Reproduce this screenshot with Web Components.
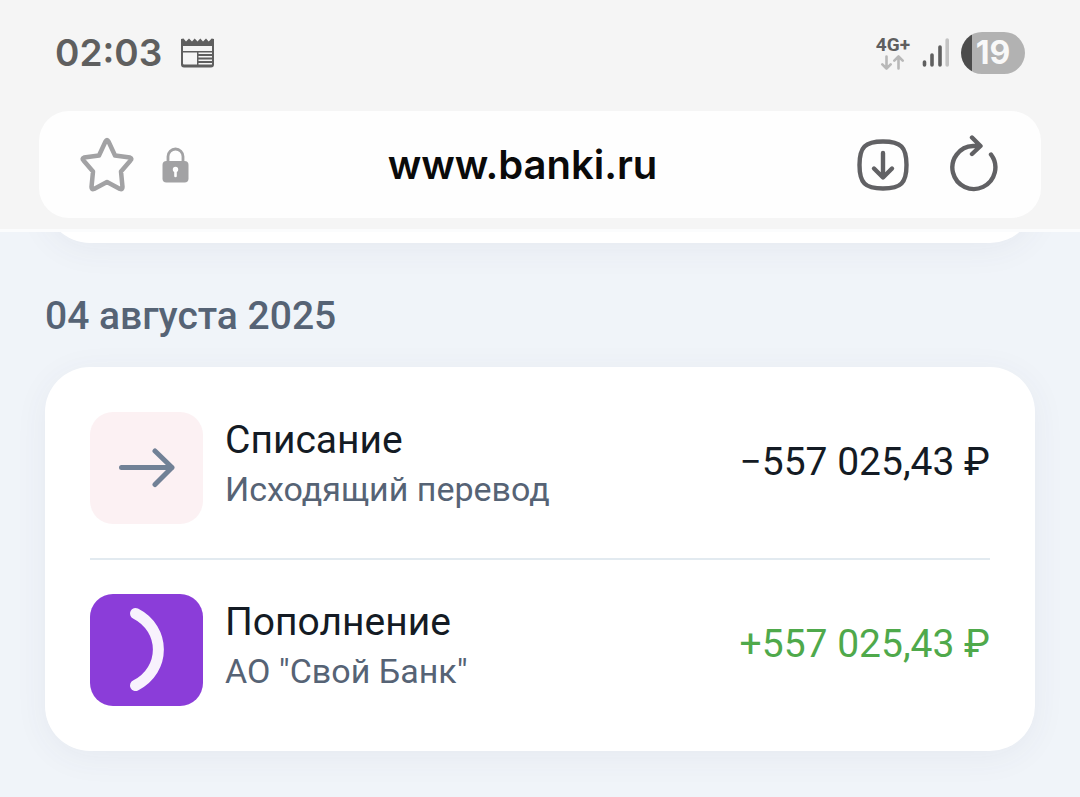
<!DOCTYPE html>
<html lang="ru">
<head>
<meta charset="utf-8">
<meta name="viewport" content="width=device-width, initial-scale=1">
<title>banki.ru</title>
<style>
  html { background: #f0f4f9; }
  body { margin: 0; font-family: Roboto, "Noto Sans", sans-serif; color: #141b24; }
</style>
</head>
<body>
<browser-chrome>
  <status-bar time="02:03" battery="19"></status-bar>
  <address-bar url="www.banki.ru"></address-bar>
</browser-chrome>
<operations-feed>
  <feed-card class="previous"></feed-card>
  <day-group day="04 августа 2025">
    <operation-row name="Списание" detail="Исходящий перевод" amount="−557 025,43 ₽">
      <transfer-icon></transfer-icon>
    </operation-row>
    <operation-row name="Пополнение" detail='АО "Свой Банк"' amount="+557 025,43 ₽" income>
      <bank-icon></bank-icon>
    </operation-row>
  </day-group>
</operations-feed>

<script>
class BaseElement extends HTMLElement {
  connectedCallback() {
    if (!this.shadowRoot) this.attachShadow({ mode: "open" }).innerHTML = this.render();
  }
  text(name) {
    return (this.getAttribute(name) || "").replace(/&/g, "&amp;").replace(/"/g, "&quot;").replace(/</g, "&lt;");
  }
}

customElements.define("browser-chrome", class extends BaseElement {
  render() {
    return `<style>
      :host { display: block; position: relative; z-index: 1; background: #f5f5f5; padding-bottom: 11px; border-bottom: 3px solid #fbfcfd; }
    </style><slot></slot>`;
  }
});

customElements.define("status-bar", class extends BaseElement {
  render() {
    return `<style>
      :host { display: flex; align-items: center; justify-content: space-between; height: 106px; padding: 0 55px 5px; color: #5f5f5f; font-family: Inter, sans-serif; }
      .group { display: flex; align-items: center; gap: 12px; }
      .left { gap: 19px; }
      time { font-size: 37px; line-height: 48px; font-weight: 600; }
      svg { display: block; }
      .net { display: grid; justify-items: center; gap: 1px; font: 700 19px/18px Roboto, sans-serif; }
      .battery { display: grid; place-items: center; width: 64px; height: 42px; border-radius: 21px; color: #f8f8f8; font-size: 32px; line-height: 42px; font-weight: 700; background: linear-gradient(90deg, #4c4c4c 11px, #b2b2b2 11px); }
    </style>
    <div class="group left">
      <time>${this.text("time")}</time>
      <svg width="33" height="30" viewBox="0 0 33 30" fill="#5f5f5f" aria-hidden="true">
        <path fill-rule="evenodd" d="M0 1l2.500-.5 2.500 3L8 .5l3 3 2.700-3 2.800 3 2.800-3 2.700 3 3-3 2.700 3 3-3L33 1v25.500a3 3 0 0 1-3 3H3a3 3 0 0 1-3-3zM2 8v5h29V8zM2 14.500v11a1 1 0 0 0 1 1h13v-12zM17.500 14.500v1.500h13.500v-1.500zM17.500 18v1.500h13.500v-1.500zM17.500 21.500v1.500h13.500v-1.500zM17.500 25v1.500h13a.5.5 0 0 0 .5-.5v-1z"/>
      </svg>
    </div>
    <div class="group">
      <div class="net"><span>4G+</span>
        <svg width="25" height="15" viewBox="0 0 25 15" fill="none" stroke="#b8b8b8" stroke-width="2.600" stroke-linecap="round" stroke-linejoin="round" aria-hidden="true"><path d="M6.500 1.500v12M2.300 9.300l4.200 4.200 4.200-4.200M18.500 13.500v-12M14.300 5.700l4.200-4.200 4.200 4.200"/></svg>
      </div>
      <svg width="27" height="30" viewBox="0 0 27 30" fill="none" stroke="#5f5f5f" stroke-width="3.600" stroke-linecap="round" aria-hidden="true"><path d="M2.500 24v3M10 17v10M18 9v18"/><path stroke="#c3c3c3" d="M25.200 2v25"/></svg>
      <span class="battery">${this.text("battery")}</span>
    </div>`;
  }
});

customElements.define("address-bar", class extends BaseElement {
  render() {
    return `<style>
      :host { display: flex; align-items: center; margin: 0 39px; padding: 0 40px; height: 107px; border-radius: 30px; background: #fefefe; }
      button { display: block; border: 0; padding: 0; background: none; }
      svg { display: block; fill: none; stroke-linecap: round; stroke-linejoin: round; }
      .lock { margin-left: 27px; }
      .download { margin-right: 39px; }
      input { flex: 1; min-width: 0; border: 0; padding: 0; outline: 0; background: none; text-align: center; color: #0a0a0a; font: 600 40px/52px Inter, sans-serif; }
    </style>
    <button aria-label="В закладки"><svg width="56" height="56" viewBox="0 0 56 56" stroke="#a2a2a4" stroke-width="4.500"><path d="M26.500 4.500Q28 1.500 29.500 4.500L36 18.500 51 20.500Q53.500 21.500 51.500 23.500L42 34.500 43.500 50Q43.500 53 41 52L28 45 15 52Q12.500 53 12.500 50L14 34.500 4.500 23.500Q2.500 21.500 5 20.500L20 18.500Z"/></svg></button>
    <svg class="lock" width="27" height="36" viewBox="0 0 27 36" aria-hidden="true"><path d="M6 16V9.500a7.500 7.500 0 0 1 15 0V16" stroke="#a2a2a4" stroke-width="2.800"/><rect x="0.500" y="14" width="26" height="21.500" rx="4" fill="#a2a2a4"/><circle cx="13.500" cy="22.500" r="2.700" fill="#fff"/><path d="M13.500 23v6" stroke="#fff" stroke-width="2.600"/></svg>
    <input type="text" inputmode="url" aria-label="Адрес сайта" value="${this.text("url")}">
    <button class="download" aria-label="Загрузки"><svg width="54" height="54" viewBox="0 0 54 54" stroke="#616164" stroke-width="4.400"><path d="M27 3.500C45 3.500 50.500 9 50.500 27S45 50.500 27 50.500 3.500 45 3.500 27 9 3.500 27 3.500Z"/><path d="M27 15v24M18 30.500l9 9 9-9"/></svg></button>
    <button aria-label="Обновить"><svg width="52" height="62" viewBox="0 0 52 62" stroke="#616164" stroke-width="4.400"><path d="M42 20.500A21.500 21.500 0 1 1 24 12H31M23 3.500l8.500 8.500-8.500 8"/></svg></button>`;
  }
});

customElements.define("operations-feed", class extends BaseElement {
  render() {
    return `<style>
      :host { display: block; padding: 0 45px 46px; }
      /* the previous day's card is scrolled mostly under the toolbar */
      ::slotted(.previous) { height: 100px; margin-top: -89px; }
    </style><slot></slot>`;
  }
});

customElements.define("feed-card", class extends BaseElement {
  render() {
    return `<style>
      :host { display: block; box-sizing: border-box; background: #fff; border-radius: 45px; box-shadow: 0 6px 34px rgba(60, 75, 100, .06); }
    </style><slot></slot>`;
  }
});

customElements.define("day-group", class extends BaseElement {
  render() {
    return `<style>
      :host { display: block; }
      h2 { margin: 48px 0 26px; font-size: 39px; line-height: 50px; font-weight: 500; color: #566375; }
      feed-card { padding: 45px; }
      ::slotted(operation-row:not(:first-child)) { border-top: 2px solid #e2eaf0; margin-top: 34px; padding-top: 34px; }
    </style>
    <h2>${this.text("day")}</h2>
    <feed-card><slot></slot></feed-card>`;
  }
});

customElements.define("operation-row", class extends BaseElement {
  render() {
    return `<style>
      :host { display: flex; align-items: center; gap: 22px; }
      .info { flex: 1; min-width: 0; padding-bottom: 8px; }
      .name, .amount { font-size: 39px; line-height: 50px; }
      .detail { font-size: 34px; line-height: 48px; color: #566375; }
      .amount { padding-bottom: 12px; white-space: nowrap; }
      :host([income]) .amount { color: #4fa94b; }
    </style>
    <slot></slot>
    <div class="info"><div class="name">${this.text("name")}</div><div class="detail">${this.text("detail")}</div></div>
    <div class="amount">${this.text("amount")}</div>`;
  }
});

customElements.define("transfer-icon", class extends BaseElement {
  render() {
    return `<style>
      :host { display: grid; place-items: center; width: 113px; height: 112px; border-radius: 23px; background: #fcf1f3; }
    </style>
    <svg width="56" height="42" viewBox="0 0 56 42" fill="none" stroke="#718196" stroke-width="5" stroke-linecap="round" stroke-linejoin="round" aria-hidden="true"><path d="M2.500 20.500H53M36 4L53 20.500 36 37.500"/></svg>`;
  }
});

customElements.define("bank-icon", class extends BaseElement {
  render() {
    return `<style>
      :host { display: block; width: 113px; height: 112px; border-radius: 23px; background: #8b3dd9; }
      svg { display: block; }
    </style>
    <svg width="113" height="112" viewBox="0 0 113 112" fill="none" stroke="#f8f2fd" stroke-width="11" stroke-linecap="round" aria-hidden="true"><path d="M45.500 19.500C76 35 76 76 45.500 91.500"/></svg>`;
  }
});
</script>
</body>
</html>
